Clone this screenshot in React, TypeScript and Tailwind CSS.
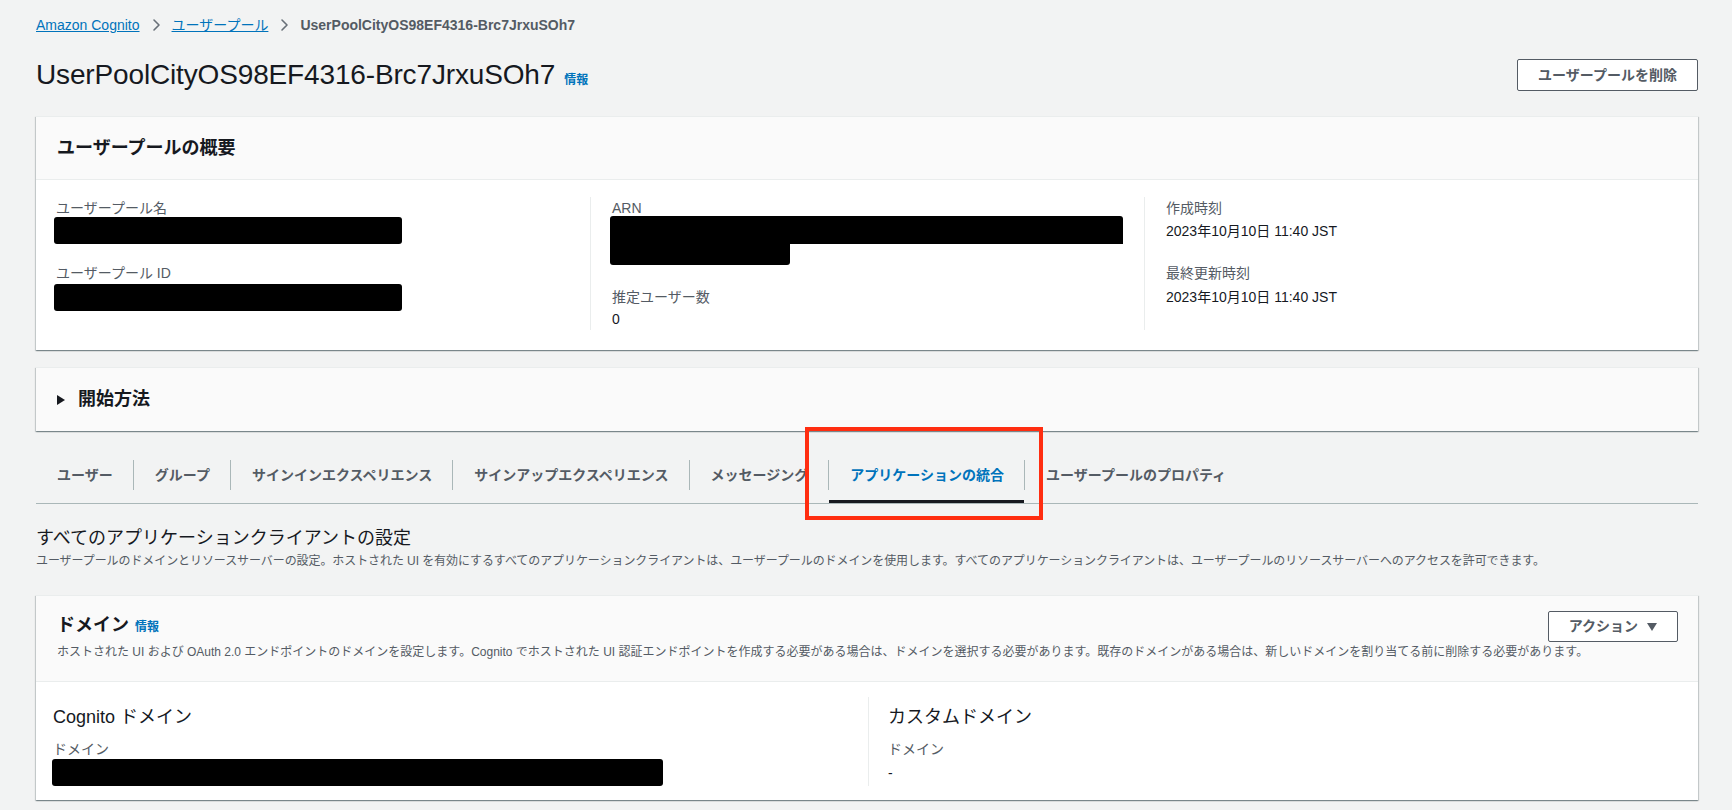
import React from "react";

const cardShadow =
  "bg-white border-t border-[#eaeded] shadow-[0_1px_1px_0_rgba(0,28,36,0.3),1px_1px_1px_0_rgba(0,28,36,0.15),-1px_1px_1px_0_rgba(0,28,36,0.15)]";

const tabs = [
  "ユーザー",
  "グループ",
  "サインインエクスペリエンス",
  "サインアップエクスペリエンス",
  "メッセージング",
  "アプリケーションの統合",
  "ユーザープールのプロパティ",
];

function Chevron() {
  return (
    <svg viewBox="0 0 16 16" className="w-4 h-4 mx-[8px] text-[#687078]" fill="none">
      <path d="M6 3l5 5-5 5" stroke="currentColor" strokeWidth="1.6" strokeLinejoin="round" strokeLinecap="round" />
    </svg>
  );
}

function Label({ children }: { children: React.ReactNode }) {
  return <div className="h-[22px] leading-[22px] text-[14px] text-[#545b64]">{children}</div>;
}

function Redacted({ className }: { className: string }) {
  return <div className={"bg-black rounded-[3px] -ml-[2px] " + className} />;
}

export default function App() {
  return (
    <div className="min-h-screen w-full bg-[#f2f3f3] text-[#16191f] font-['Liberation_Sans','Noto_Sans_CJK_JP',sans-serif] pl-[36px] pr-[34px] pt-[14px] pb-[9px]">
      {/* Breadcrumbs */}
      <nav className="flex items-center h-[22px] text-[14px] leading-[22px]">
        <a className="text-[#0073bb] underline">Amazon Cognito</a>
        <Chevron />
        <a className="text-[#0073bb] underline">ユーザープール</a>
        <Chevron />
        <span className="font-bold text-[#545b64]">UserPoolCityOS98EF4316-Brc7JrxuSOh7</span>
      </nav>

      {/* Page header */}
      <div className="mt-[21px] flex items-center justify-between h-[36px]">
        <div className="flex items-baseline">
          <h1 className="text-[28px] leading-[36px] font-normal tracking-[-0.15px]">UserPoolCityOS98EF4316-Brc7JrxuSOh7</h1>
          <a className="ml-[9px] text-[12px] font-bold text-[#0073bb]">情報</a>
        </div>
        <button className="h-[32px] px-[20px] border border-[#545b64] rounded-[2px] bg-white text-[14px] font-bold text-[#545b64]">
          ユーザープールを削除
        </button>
      </div>

      {/* Overview */}
      <section className={"mt-[23px] " + cardShadow}>
        <div className="h-[63px] bg-[#fafafa] border-b border-[#eaeded] px-[21px] flex items-center">
          <h2 className="text-[18px] font-bold">ユーザープールの概要</h2>
        </div>
        <div className="pl-[20px] pr-[20px] pt-[17px] pb-[20px] grid grid-cols-[534px_554px_1fr]">
          <div>
            <Label>ユーザープール名</Label>
            <Redacted className="mt-[-2px] h-[27px] w-[348px]" />
            <div className="mt-[18px]">
              <Label>ユーザープール ID</Label>
            </div>
            <Redacted className="h-[27px] w-[348px]" />
          </div>
          <div className="border-l border-[#eaeded] pl-[21px]">
            <Label>ARN</Label>
            <Redacted className="mt-[-3px] h-[28px] w-[513px] rounded-b-none" />
            <Redacted className="h-[21px] w-[180px] rounded-t-none" />
            <div className="mt-[21px]">
              <Label>推定ユーザー数</Label>
            </div>
            <div className="h-[22px] leading-[22px] text-[14px]">0</div>
          </div>
          <div className="border-l border-[#eaeded] pl-[21px]">
            <Label>作成時刻</Label>
            <div className="mt-[1px] h-[22px] leading-[22px] text-[14px]">2023年10月10日 11:40 JST</div>
            <div className="mt-[20px]">
              <Label>最終更新時刻</Label>
            </div>
            <div className="mt-[2px] h-[22px] leading-[22px] text-[14px]">2023年10月10日 11:40 JST</div>
          </div>
        </div>
      </section>

      {/* Getting started (collapsed) */}
      <section className={"mt-[17px] " + cardShadow}>
        <div className="h-[63px] bg-[#fafafa] pl-[21px] flex items-center">
          <svg viewBox="0 0 8 10" className="w-[8px] h-[10px] text-[#16191f]">
            <path d="M0 0l8 5-8 5z" fill="currentColor" />
          </svg>
          <h2 className="ml-[13px] text-[18px] font-bold">開始方法</h2>
        </div>
      </section>

      {/* Tabs */}
      <div className="mt-[16px] h-[57px] border-b border-[#aab7b8] flex items-stretch">
        {tabs.map((t, i) => {
          const active = i === 5;
          return (
            <div key={t} className="flex items-center">
              {i > 0 && <div className="w-px h-[30px] bg-[#aab7b8]" />}
              <div
                className={
                  "relative h-full flex items-center pl-[21px] pr-[20px] text-[14px] font-bold " +
                  (active ? "text-[#0073bb]" : "text-[#545b64]")
                }
              >
                {t}
                {active && <div className="absolute left-0 right-0 bottom-0 h-[3px] bg-[#16191f]" />}
                {active && (
                  <div className="pointer-events-none absolute left-[-24px] right-[-19px] top-[-20px] bottom-[-17px] border-4 border-[#ff2d10]" />
                )}
              </div>
            </div>
          );
        })}
      </div>

      {/* Section heading */}
      <h2 className="mt-[23px] text-[18px] leading-[22px] font-normal">すべてのアプリケーションクライアントの設定</h2>
      <p className="mt-[4px] text-[12px] leading-[16px] text-[#545b64] tracking-[-0.08px]">
        ユーザープールのドメインとリソースサーバーの設定。ホストされた UI を有効にするすべてのアプリケーションクライアントは、ユーザープールのドメインを使用します。すべてのアプリケーションクライアントは、ユーザープールのリソースサーバーへのアクセスを許可できます。
      </p>

      {/* Domain */}
      <section className={"mt-[26px] " + cardShadow}>
        <div className="bg-[#fafafa] border-b border-[#eaeded] pl-[21px] pr-[20px] pt-[15px] pb-[21px]">
          <div className="flex items-start justify-between">
            <div className="flex items-baseline">
              <h2 className="text-[18px] leading-[28px] font-bold">ドメイン</h2>
              <a className="ml-[6px] text-[12px] font-bold text-[#0073bb]">情報</a>
            </div>
            <button className="h-[31px] px-[20px] border border-[#545b64] rounded-[2px] bg-white text-[14px] font-bold text-[#545b64] flex items-center">
              アクション
              <svg viewBox="0 0 10 8" className="ml-[9px] w-[10px] h-[8px]">
                <path d="M0 0h10L5 8z" fill="currentColor" />
              </svg>
            </button>
          </div>
          <p className="mt-[2px] text-[12px] leading-[16px] text-[#545b64]">
            ホストされた UI および OAuth 2.0 エンドポイントのドメインを設定します。Cognito でホストされた UI 認証エンドポイントを作成する必要がある場合は、ドメインを選択する必要があります。既存のドメインがある場合は、新しいドメインを割り当てる前に削除する必要があります。
          </p>
        </div>
        <div className="pl-[17px] pr-[20px] pt-[15px] pb-[14px] grid grid-cols-[815px_1fr]">
          <div>
            <h3 className="pt-[6px] text-[18px] leading-[28px] font-normal">Cognito ドメイン</h3>
            <div className="mt-[7px]">
              <Label>ドメイン</Label>
            </div>
            <Redacted className="mt-[-1px] h-[27px] w-[611px] ml-[-1px]" />
          </div>
          <div className="border-l border-[#eaeded] pl-[19px]">
            <h3 className="pt-[6px] text-[18px] leading-[28px] font-normal">カスタムドメイン</h3>
            <div className="mt-[7px]">
              <Label>ドメイン</Label>
            </div>
            <div className="mt-[2px] h-[22px] leading-[22px] text-[14px]">-</div>
          </div>
        </div>
      </section>
    </div>
  );
}
